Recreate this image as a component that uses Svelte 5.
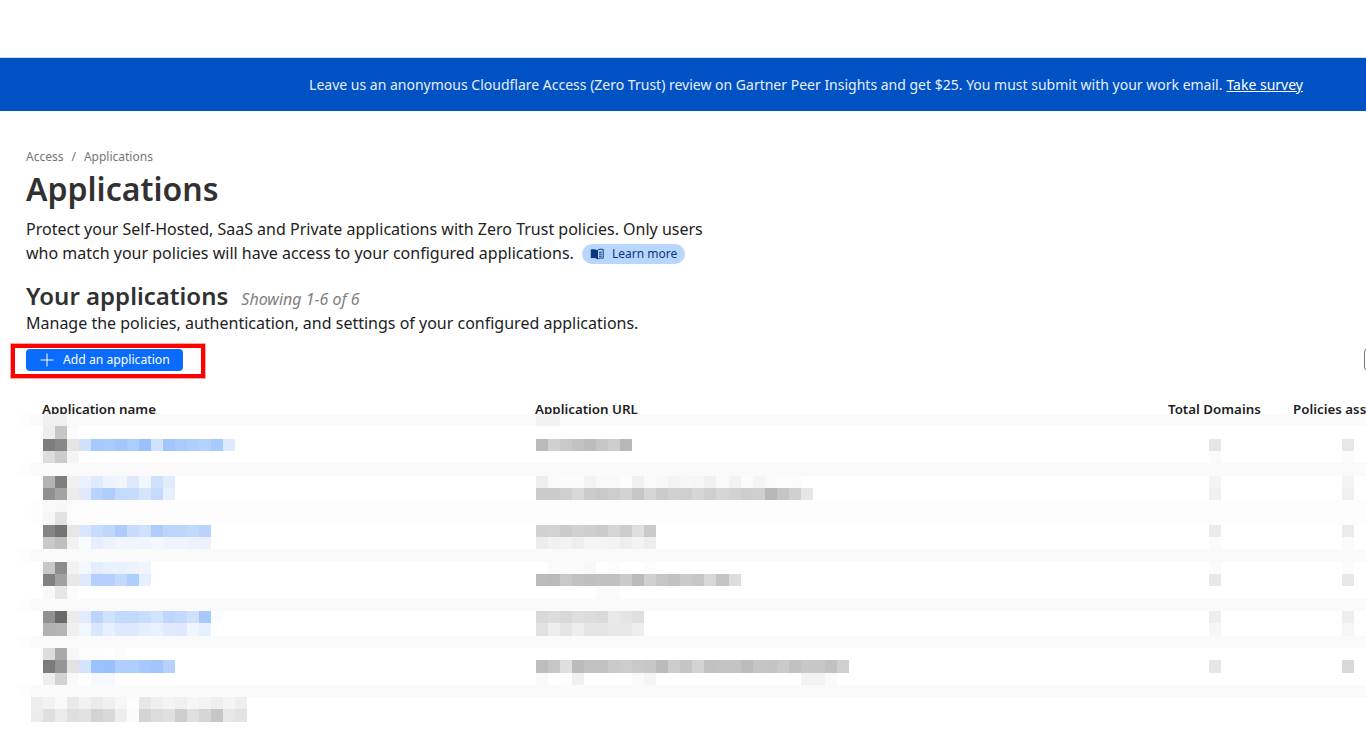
<script lang="ts">
  // pixelated table: each line is one mosaic row, colours are space separated, "-" is see-through
  // name starts at x=31, url at x=536, domains at x=1209, policies at x=1342
  const lines = [
    { h: 12, bg: 'band', name: '- f0f0f0 f0f0f0', url: 'f2f2f2 f2f2f2' },
    { h: 13, name: '- eeeeee c6c6c6 fbfbfb' },
    { h: 12, name: '- 7e7e7e 878887 e5e5e5 d0e2fb a8c9fc a9cafc a3c6fd accdfc 9ac0fd d1e2fc a2c5fd a9cafc afcefc b5d2fc a8cafc dde9fd', url: 'b9b9b9 d0d0d0 c8c8c8 c2c2c2 bcbcbc c6c6c6 cdcdcd b8b8b8', dom: 'e6e6e6', pol: 'e6e6e6' },
    { h: 12, name: '- dddddd cccccc f5f5f5', dom: 'fbfbfb', pol: 'fbfbfb' },
    { h: 13, bg: 'band' },
    { h: 12, name: '- b2b3b2 7f7f7f f1f1f1 ebf2fe deeafe eef4fe f1f6fe dde9fd f2f6fe cfe1fc e0ebfe', url: 'efefef fafafa fbfbfb fbfbfb f3f3f3 f9f9f9 f9f9f9 fcfcfc f1f1f1 fafafa f8f8f8 f4f4f4 f7f7f7 f6f6f6 f1f1f1 fafafa f3f3f3 fbfbfb f5f5f5 fafafa fcfcfc fbfbfb', dom: 'f4f4f4', pol: 'f4f4f4' },
    { h: 12, name: '- 8f908f a3a3a3 ececec e0eafc b8d3fd aecdfc c4dafd c7dcfd d6e5fd c3d9fd e8f0fe', url: 'cbcbcb cbcbcb cfcfcf d8d8d8 cbcbcb c8c8c8 cdcdcd d3d3d3 c6c6c6 d6d6d6 cbcbcb d1d1d1 cfcfcf d6d6d6 cfcfcf d6d6d6 d2d2d2 cdcdcd cfcfcf b8b8b8 c5c5c5 d0d0d0 e6e6e6', dom: 'f0f0f0', pol: 'f0f0f0' },
    { h: 12, bg: 'faint', name: '- f9f9f9 f7f7f7 fbfbfb' },
    { h: 13, bg: 'faint', name: '- f6f6f6 e2e2e2 fbfbfb' },
    { h: 12, name: '- 848484 737473 e6e6e6 d9e6fd c8dcfc c0d7fc adcbfc c7dbfc cfe1fd aecdfc bdd5fc bdd5fc c3d9fc bad3fc', url: 'd1d1d1 d3d3d3 cbcbcb d1d1d1 cecece cbcbcb d6d6d6 cccccc dfdfdf cacaca', dom: 'ebebeb', pol: 'ebebeb' },
    { h: 12, name: '- c9c9c9 bebebe f2f2f2 fafbfe e6effe edf3fe f0f5fe f0f5fe eff4fe f3f7fe eff4fe eff4fe ecf2fe ebf1fe', url: 'ececec f1f1f1 f3f3f3 eeeeee f5f5f5 f5f5f5 f3f3f3 eeeeee f3f3f3 eeeeee', dom: 'fbfbfb', pol: 'fbfbfb' },
    { h: 13, bg: 'band' },
    { h: 12, name: '- c8c8c8 8c8c8c f2f2f2 f5f8fe e4eefe e9f0fe e9f0fe edf3fe f0f5fe', url: '- fbfbfb fbfbfb fbfbfb f8f8f8 - fcfcfc - - fcfcfc', dom: 'fbfbfb', pol: 'fbfbfb' },
    { h: 12, name: '- 808180 a1a1a1 e8e8e8 deeafe b2cffd b2cffd c2d8fd b0cefc e6effe', url: 'bcbcbc bababa c8c8c8 c2c2c2 bfbfbf c1c1c1 c1c1c1 cacaca bbbbbb d0d0d0 c6c6c6 c2c2c2 cacaca c7c7c7 d8d8d8 c5c5c5 dddddd', dom: 'e8e8e8', pol: 'e8e8e8' },
    { h: 13, name: '- f8f8f8 e5e6e5 fbfbfb', url: '- - - - - fbfbfb fbfbfb' },
    { h: 12, bg: 'band' },
    { h: 12, name: '- 919191 696969 ebebeb e3ecfe bcd5fc cfe1fd c4dafd c4dafd c9ddfd d2e3fd bdd6fd c3d9fd cfe1fd a6c8fd fafcff', url: 'd9d9d9 dcdcdc d9d9d9 dedede dddddd dadada e9e9e9 e5e5e5 dfdfdf', dom: 'eeeeee', pol: 'eeeeee' },
    { h: 13, name: '- b2b2b2 b4b4b4 f0f0f0 f0f5fe d9e7fe e8f0fe dde9fe dce9fe e4eefe e9f1fe e1eafc dce9fe f1f6fe e6f0fe', url: 'e1e1e1 eeeeee e4e4e4 eeeeee e5e5e5 e5e5e5 e8e8e8 e8e8e8 eeeeee', dom: 'f6f6f6', pol: 'f6f6f6' },
    { h: 12, bg: 'band' },
    { h: 12, name: '- dddddd a9a9a9 f7f7f7 fcfcfe fcfcfe fefefe fbfbfe' },
    { h: 13, name: '- 7a7b7a 959595 e2e3e2 d4e4fc 9cc2fd 99bffd afcdfd afcdfd a7c8fd a2c5fd b6d1fc', url: 'bdbdbd c6c6c6 dfdfdf bbbbbb c2c2c2 c2c2c2 cacaca cdcdcd c9c9c9 c7c7c7 bbbbbb cccccc c5c5c5 d3d3d3 c2c2c2 c3c3c3 c3c3c3 bcbcbc c5c5c5 c4c4c4 cacaca c1c1c1 c7c7c7 c7c7c7 c1c1c1 cfcfcf', dom: 'e6e6e6', pol: 'd9d9d9' },
    { h: 12, name: '- ededed d3d3d3 f8f9f8 - f5f8fe f5f8fe', url: 'f9f9f9 - fdfdfd f0f0f0 - - - - fafafa f5f5f5 - - - - - - - - - - - - f3f3f3 f3f3f3 fafafa' },
    { h: 12, bg: 'band' },
    { h: 12, name: 'ededed f2f2f2 f9f9f9 e9e9e9 f2f2f2 ebebeb f0f0f0 f7f7f7 fdfdfd e7e7e7 efefef f4f4f4 f0f0f0 f6f6f6 f3f3f3 eeeeee f4f4f4 eeeeee' },
    { h: 13, name: 'ececec dfdfdf ebebeb dfdfdf e2e2e2 d3d3d3 d9d9d9 eeeeee fbfbfb d4d4d4 dcdcdc e0e0e0 cdcdcd e0e0e0 d5d5d5 c6c6c6 e7e7e7 e3e3e3' }
  ];

  const cells = (s?: string) => (s ? s.split(' ') : []);
  const fill = (c: string) => (c === '-' ? 'transparent' : `#${c}`);
</script>

{#snippet seg(colors?: string)}
  <div class="seg">
    {#each cells(colors) as c}
      <i style="background: {fill(c)}"></i>
    {/each}
  </div>
{/snippet}

<div class="topbar"></div>

<div class="banner">
  <span>Leave us an anonymous Cloudflare Access (Zero Trust) review on Gartner Peer Insights and get $25. You must submit with your work email.</span>
  <a href="#survey">Take survey</a>
</div>

<main class="page">
  <nav class="crumbs"><span>Access</span><span class="sep">/</span><span>Applications</span></nav>
  <h1>Applications</h1>
  <p class="intro">
    Protect your Self-Hosted, SaaS and Private applications with Zero Trust policies. Only users who match your policies will have access to your configured applications.
    <a class="pill" href="#docs">
      <svg width="14" height="14" viewBox="0 0 14 14" aria-hidden="true">
        <path d="M7 3.2C5.6 2.2 3.2 2 .8 2.4v8.8c2.4-.4 4.8-.2 6.2.8z" fill="currentColor" />
        <path d="M7.500 3.200c1.400-1 3.400-1.200 5.700-.8v8.800c-2.300-.4-4.300-.2-5.700.8z" fill="none" stroke="currentColor" />
        <path d="M9 5.200h2.800M9 7.200h2.800M9 9.200h2.800" stroke="currentColor" fill="none" />
      </svg>
      Learn more
    </a>
  </p>

  <div class="heading">
    <h2>Your applications</h2>
    <em>Showing 1-6 of 6</em>
  </div>
  <p class="sub">Manage the policies, authentication, and settings of your configured applications.</p>

  <div class="toolbar">
    <div class="highlight">
      <button class="add" type="button">
        <svg width="14" height="14" viewBox="0 0 14 14" aria-hidden="true">
          <path d="M7 .5v13M.5 7h13" stroke="currentColor" stroke-width="1" fill="none" />
        </svg>
        Add an application
      </button>
    </div>
    <div class="filter"></div>
  </div>
</main>

<section class="table">
  <div class="thead">
    <span class="c-name">Application name</span>
    <span class="c-url">Application URL</span>
    <span class="c-dom">Total Domains</span>
    <span class="c-pol">Policies assigned</span>
  </div>
  {#each lines as line}
    <div class="line {line.bg ?? ''}" style="height: {line.h}px">
      {@render seg(line.name)}
      {@render seg(line.url)}
      {@render seg(line.dom)}
      {@render seg(line.pol)}
    </div>
  {/each}
</section>

<style>
  :global(body) {
    overflow: hidden;
    background: #fff;
    font-family: "Noto Sans", sans-serif;
    color: #222;
  }

  .topbar {
    height: 57px;
    border-bottom: 1px solid #dcdcdc;
    box-sizing: content-box;
  }

  .banner {
    height: 53px;
    background: #0051c3;
    color: #e6effb;
    display: flex;
    align-items: center;
    justify-content: flex-end;
    gap: 4px;
    padding-right: 63px;
    font-size: 14px;
  }

  .banner a {
    color: #fff;
    text-decoration: underline;
  }

  .page {
    padding: 38px 0 0 26px;
  }

  .crumbs {
    display: flex;
    gap: 8px;
    font-size: 12px;
    line-height: 16px;
    color: #757575;
  }

  h1 {
    margin: 4px 0 0;
    font-size: 32px;
    line-height: 40px;
    font-weight: 600;
    color: #313131;
  }

  .intro {
    margin: 8px 0 0;
    width: 700px;
    font-size: 16px;
    line-height: 24px;
  }

  .pill {
    display: inline-flex;
    align-items: center;
    gap: 8px;
    height: 20px;
    margin-left: 4px;
    padding: 0 8px;
    border-radius: 10px;
    background: #b9d6ff;
    color: #07387f;
    font-size: 12px;
    line-height: 20px;
    text-decoration: none;
    vertical-align: -2px;
  }

  .heading {
    display: flex;
    align-items: baseline;
    gap: 13px;
    margin-top: 15px;
  }

  h2 {
    margin: 0;
    font-size: 24px;
    line-height: 32px;
    font-weight: 600;
    color: #313131;
  }

  .heading em {
    font-size: 16px;
    color: #808080;
  }

  .sub {
    margin: 0;
    font-size: 16px;
    line-height: 22px;
    color: #1d1d1d;
  }

  .toolbar {
    display: flex;
    justify-content: space-between;
    margin-top: 10px;
    margin-right: -28px;
  }

  .highlight {
    margin-left: -15px;
    padding: 1px 18px 3px 11px;
    border: 4px solid #f00;
    box-shadow: 0 0 0 1px rgba(255, 0, 0, 0.35);
  }

  .add {
    display: flex;
    align-items: center;
    gap: 9px;
    height: 22px;
    padding: 0 13px 2px 14px;
    border: 0;
    border-radius: 4px;
    background: #0a6cff;
    color: #fff;
    font: 12.2px "Noto Sans", sans-serif;
  }

  .add svg {
    margin-top: 2px;
  }

  .filter {
    width: 28px;
    height: 21px;
    margin-top: 4px;
    border: 1px solid #757575;
    border-radius: 4px;
  }

  .table {
    overflow: hidden;
    margin-top: 25px;
  }

  .thead {
    display: flex;
    height: 11px;
    overflow: hidden;
    padding-left: 42px;
    font-size: 13.33px;
    font-weight: 600;
    line-height: 12px;
    white-space: nowrap;
    color: #1d1d1d;
  }

  .c-name { flex: 0 0 493px; }
  .c-url { flex: 0 0 633px; }
  .c-dom { flex: 0 0 125px; }

  .line {
    display: grid;
    grid-template-columns: 505px 673px 133px 1fr;
    padding-left: 31px;
  }

  .band {
    background: linear-gradient(90deg, #fff 19px, #fdfdfd 19px, #fdfdfd 31px, #fafafa 31px);
  }

  .faint {
    background: linear-gradient(90deg, #fff 31px, #fdfdfd 31px);
  }

  .seg {
    display: flex;
  }

  .seg i {
    flex: 0 0 12px;
  }

  .seg:nth-child(2) i {
    flex-basis: 12.04px;
  }
</style>
